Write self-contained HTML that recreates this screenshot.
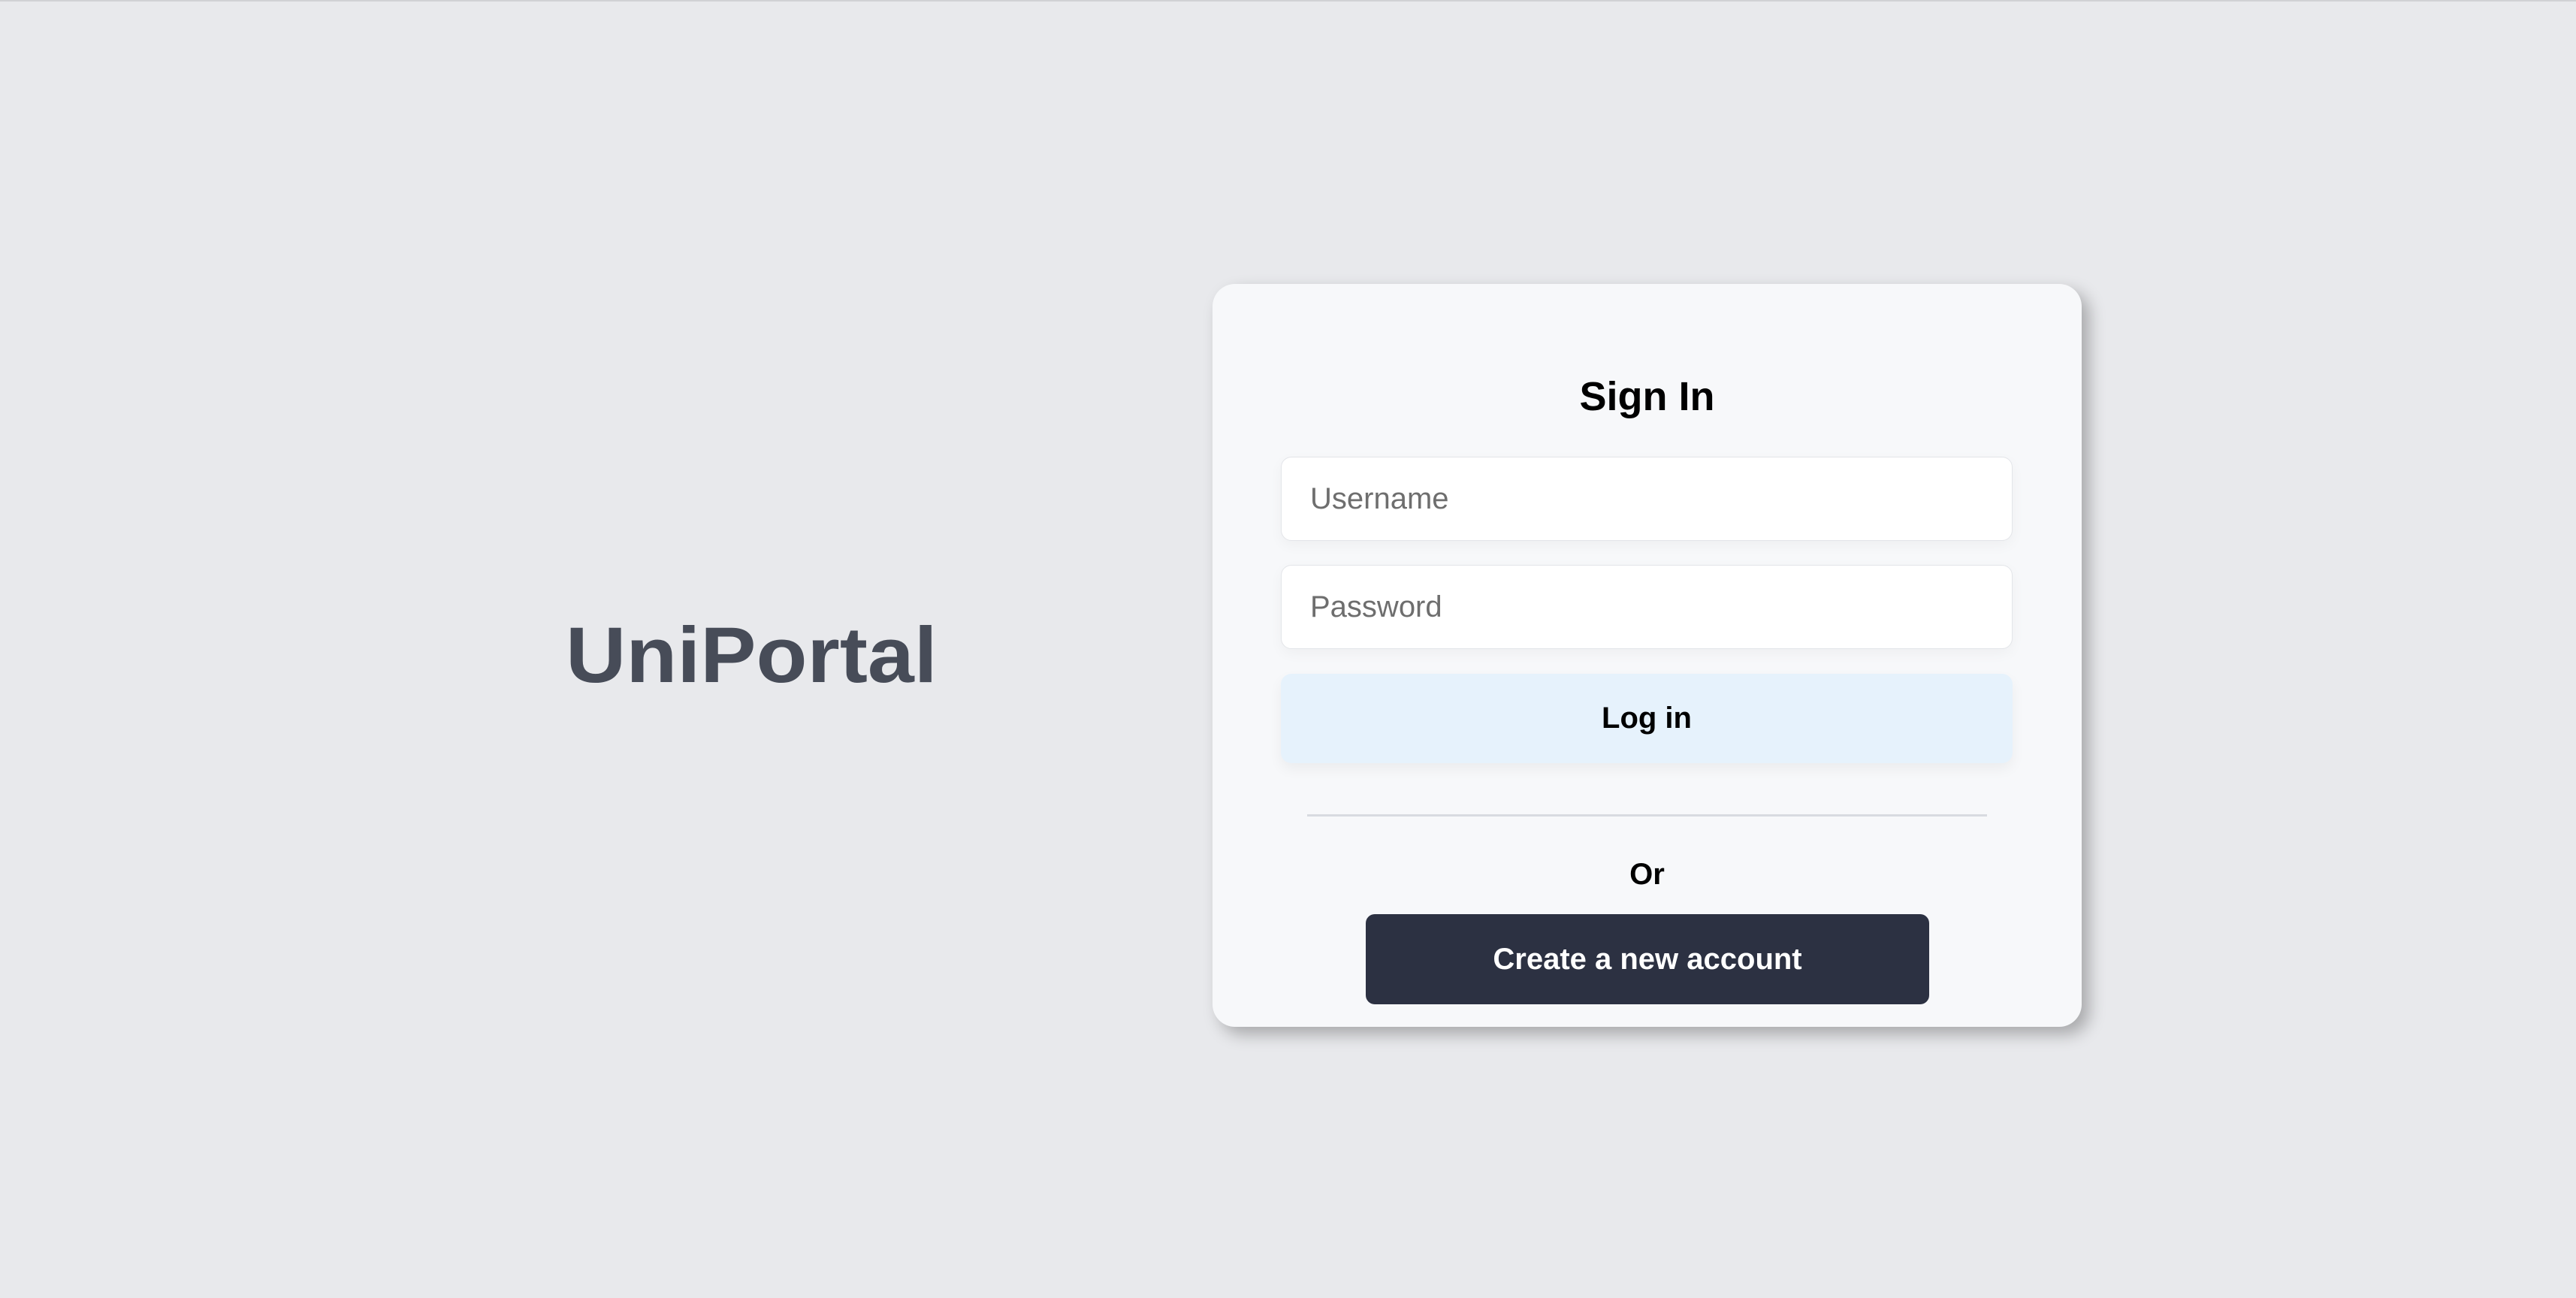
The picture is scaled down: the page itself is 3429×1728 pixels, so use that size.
<!DOCTYPE html>
<html><head><meta charset="utf-8"><style>
html,body{margin:0;padding:0;}
body{width:3429px;height:1728px;background:#e8e9ec;position:relative;overflow:hidden;font-family:"Liberation Sans",Arial,sans-serif;border-top:2px solid #d0d1d4;box-sizing:border-box;}
.logo{position:absolute;left:753px;top:818px;font-size:105px;font-weight:bold;color:#474c58;line-height:1;transform:scaleX(1.06);transform-origin:left top;white-space:nowrap;}
.card{position:absolute;left:1614px;top:376px;width:1157px;height:989px;background:#f7f8fa;border-radius:30px;box-shadow:10px 10px 22px rgba(0,0,0,0.28);}
.title{position:absolute;left:0;width:100%;top:120px;text-align:center;font-size:54px;font-weight:bold;color:#000;line-height:60px;}
.inp{position:absolute;left:91px;width:974px;height:112px;background:#fff;border:1px solid #e3e5e9;border-radius:14px;box-sizing:border-box;box-shadow:0 6px 18px rgba(0,0,0,0.04);font-size:40px;color:#6e6e6e;line-height:110px;padding-left:38px;}
.login{position:absolute;left:91px;width:974px;top:519px;height:119px;background:#e6f2fc;border-radius:14px;box-shadow:0 8px 18px rgba(0,0,0,0.05);text-align:center;line-height:119px;font-size:40px;font-weight:bold;color:#000;}
.hr{position:absolute;left:126px;width:905px;top:706px;height:3px;background:#d8dbe0;}
.or{position:absolute;left:0;width:100%;top:764px;text-align:center;font-size:40px;font-weight:bold;color:#000;line-height:44px;}
.create{position:absolute;left:204px;width:750px;top:839px;height:120px;background:#2c3142;border-radius:12px;text-align:center;line-height:120px;font-size:40px;font-weight:bold;color:#fff;}
</style></head><body>
<div class="logo">UniPortal</div>
<div class="card">
<div class="title">Sign In</div>
<div class="inp" style="top:230px">Username</div>
<div class="inp" style="top:374px">Password</div>
<div class="login">Log in</div>
<div class="hr"></div>
<div class="or">Or</div>
<div class="create">Create a new account</div>
</div>
</body></html>
